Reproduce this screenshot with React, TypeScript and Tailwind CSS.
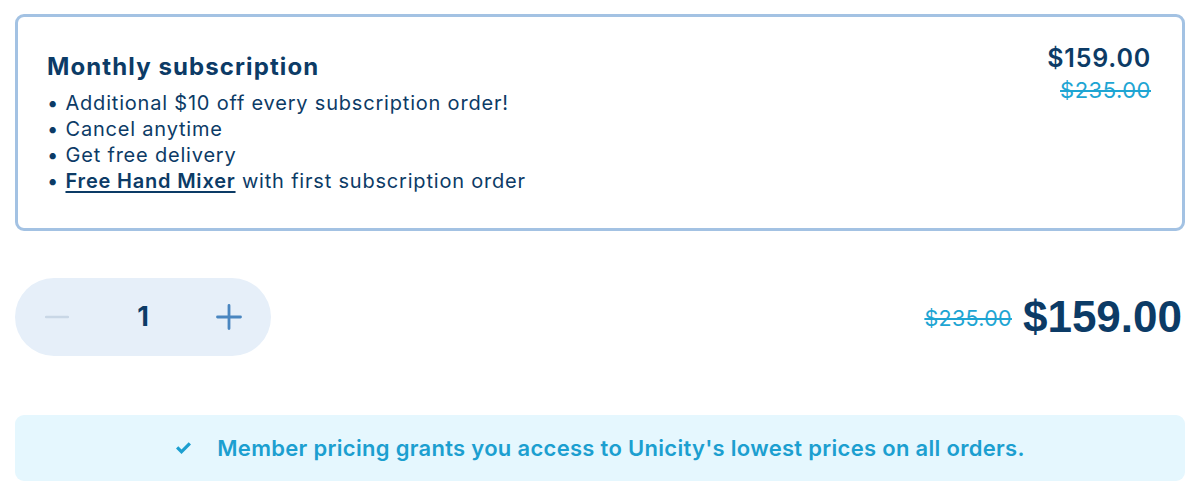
import React from "react";

export default function App() {
  return (
    <div className="w-[1200px] h-[500px] bg-white px-[15px] pt-[14px]" style={{ fontFamily: "Inter, 'Noto Sans', sans-serif" }}>
      <div className="border-[3px] border-[#a3c2e3] rounded-[9px] h-[217px] flex justify-between pl-[29px] pr-[31px] pt-[24px]">
        <div className="text-[#0c3b66]">
          <div className="text-[24px] font-bold tracking-[1.1px] leading-[30px] mt-[11px]">Monthly subscription</div>
          <ul className="text-[20px] tracking-[0.8px] leading-[26px] mt-[8px]">
            <li>• Additional $10 off every subscription order!</li>
            <li>• Cancel anytime</li>
            <li>• Get free delivery</li>
            <li>
              • <a className="font-semibold underline underline-offset-[3px]">Free Hand Mixer</a> with first subscription order
            </li>
          </ul>
        </div>
        <div className="flex flex-col items-end">
          <div className="text-[25px] font-semibold text-[#0c3b66] leading-[34px] tracking-[0.8px]">$159.00</div>
          <div className="text-[22px] text-[#1ea5d3] line-through leading-[30px] tracking-[0.5px]">$235.00</div>
        </div>
      </div>

      <div className="flex justify-between items-center mt-[47px]">
        <div className="w-[256px] h-[78px] rounded-full bg-[#e6eff9] flex items-center justify-between px-[28px]">
          <button className="w-[28px] h-[28px] flex items-center justify-center">
            <svg width="24" height="24" viewBox="0 0 24 24" fill="none" stroke="#c9d7e6" strokeWidth="2.5" strokeLinecap="round"><path d="M1 12h22" /></svg>
          </button>
          <span className="text-[27px] font-bold text-[#0c3b66]">1</span>
          <button className="w-[28px] h-[28px] flex items-center justify-center">
            <svg width="26" height="26" viewBox="0 0 26 26" fill="none" stroke="#4a86c0" strokeWidth="2.8" strokeLinecap="round"><path d="M1.5 13h23M13 1.5v23" /></svg>
          </button>
        </div>
        <div className="flex items-center gap-[11px] pr-[3px]">
          <span className="text-[21.5px] text-[#1ea5d3] line-through tracking-[0.3px] mt-[3px]">$235.00</span>
          <span className="text-[44px] font-bold text-[#0c3b66] leading-none" style={{ fontFamily: "'Liberation Sans', Arial, sans-serif" }}>$159.00</span>
        </div>
      </div>

      <div className="mt-[59px] h-[66px] rounded-[9px] bg-[#e5f7fe] flex items-center justify-center gap-[25px]">
        <svg width="17" height="14" viewBox="0 0 17 14" fill="#1c9fd0"><path d="M1 7.5l2.3-2.3 3.2 3.2L13.7 1.2 16 3.5l-9.5 9.5z" /></svg>
        <span className="text-[22px] font-semibold text-[#1c9fd0] tracking-[0.3px]">Member pricing grants you access to Unicity's lowest prices on all orders.</span>
      </div>
    </div>
  );
}
